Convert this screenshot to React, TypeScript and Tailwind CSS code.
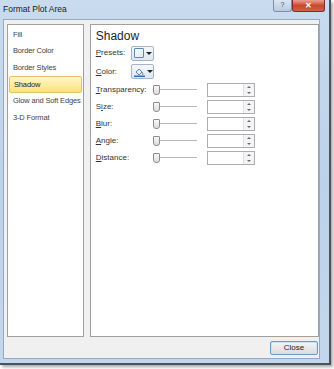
import React from "react";

const font = { fontFamily: '"Liberation Sans", Arial, sans-serif' };

function Slider() {
  return (
    <div className="relative w-[44px] h-[10px] flex items-center">
      <div className="absolute left-[3px] right-0 top-[4px] h-[1px] bg-[#b8b8b8]" />
      <div className="relative w-[7px] h-[10px] rounded-b-[3px] rounded-t-[1px] border border-[#8c8c8c] bg-gradient-to-b from-[#f8f8f8] to-[#dcdcdc]" />
    </div>
  );
}

function Spin() {
  return (
    <div className="w-[48px] h-[14px] border border-[#abadb3] bg-white flex justify-end">
      <div className="w-[11px] h-full flex flex-col border-l border-[#e0e0e0] bg-[#f4f4f4]">
        <div className="flex-1 flex items-center justify-center">
          <div className="w-0 h-0 border-l-[2px] border-r-[2px] border-b-[2px] border-l-transparent border-r-transparent border-b-[#6a6a6a]" />
        </div>
        <div className="flex-1 flex items-center justify-center">
          <div className="w-0 h-0 border-l-[2px] border-r-[2px] border-t-[2px] border-l-transparent border-r-transparent border-t-[#6a6a6a]" />
        </div>
      </div>
    </div>
  );
}

function Row({ label, u }: { label: string; u: number }) {
  return (
    <div className="flex items-center h-[17px]">
      <div className="w-[57px] text-[8px] text-[#333] whitespace-nowrap">
        {label.slice(0, u)}
        <span className="underline">{label[u]}</span>
        {label.slice(u + 1)}
      </div>
      <Slider />
      <div className="w-[10px]" />
      <Spin />
    </div>
  );
}

function DropBtn({ children }: { children: React.ReactNode }) {
  return (
    <div className="w-[23px] h-[15px] rounded-[2px] border border-[#a6b4c4] bg-gradient-to-b from-[#f5f8fb] to-[#dde6ef] flex items-center pl-[2px] gap-[2px]">
      {children}
      <div className="w-0 h-0 border-l-[3px] border-r-[3px] border-t-[3px] border-l-transparent border-r-transparent border-t-[#222]" />
    </div>
  );
}

export default function App() {
  const items = ["Fill", "Border Color", "Border Styles", "Shadow", "Glow and Soft Edges", "3-D Format"];
  return (
    <div className="w-[334px] h-[369px] bg-white overflow-hidden" style={font}>
      <div className="w-[331px] h-[365px] bg-gradient-to-b from-[#c9dbee] via-[#bcd2ea] to-[#c3d7ec] border-r-[2px] border-b-[2px] border-[#4a5460] shadow-[2px_2px_3px_rgba(0,0,0,0.35)] flex flex-col">
        <div className="h-[19px] flex items-start relative">
          <div className="text-[8.5px] text-[#1a1a1a] pl-[3px] pt-[5px] leading-none">Format Plot Area</div>
          <div className="absolute left-[273px] top-0 w-[19px] h-[12px] rounded-b-[3px] border border-t-0 border-[#7d8fa3] bg-gradient-to-b from-[#dbe6f2] to-[#b9cbe0] flex items-center justify-center text-[7px] text-[#3b4a5c]">?</div>
          <div className="absolute left-[292px] top-0 w-[33px] h-[12px] rounded-b-[3px] border border-t-0 border-[#7a3028] bg-gradient-to-b from-[#e8a08f] via-[#c9462f] to-[#d4604a] flex items-center justify-center text-[8px] font-bold text-white">✕</div>
        </div>
        <div className="ml-[3px] mr-[9px] h-[340px] border border-[#95aac0] bg-[#f0f0f0] flex flex-col">
          <div className="flex gap-[6px] pl-[3px] pt-[4px]">
            <div className="w-[77px] h-[313px] border border-[#a0a0a0] bg-white pt-[1px] px-[1px]">
              {items.map((it) => (
                <div
                  key={it}
                  className={
                    "h-[16.7px] flex items-center pl-[4px] text-[7.5px] tracking-[-0.15px] whitespace-nowrap " +
                    (it === "Shadow"
                      ? "border border-[#e5c365] rounded-[2px] bg-gradient-to-b from-[#fff6c7] to-[#ffe27a] text-[#1e1e1e]"
                      : "text-[#444]")
                  }
                >
                  {it}
                </div>
              ))}
            </div>
            <div className="w-[230px] h-[313px] border border-[#a0a0a0] bg-white pl-[5px] pt-[3px]">
              <div className="text-[12px] text-[#1e1e1e] leading-none h-[16px] pt-[2px]">Shadow</div>
              <div className="flex items-center h-[18px]">
                <div className="w-[35px] text-[8px] text-[#333]"><span className="underline">P</span>resets:</div>
                <DropBtn>
                  <div className="w-[10px] h-[10px] border border-[#5a88b8] rounded-[1px] bg-gradient-to-br from-white to-[#dce8f5]" />
                </DropBtn>
              </div>
              <div className="flex items-center h-[19px]">
                <div className="w-[35px] text-[8px] text-[#333]"><span className="underline">C</span>olor:</div>
                <DropBtn>
                  <svg width="11" height="10" viewBox="0 0 11 10">
                    <path d="M2 5 L5 2 L8 5 L5 8 Z" fill="#e8eef6" stroke="#4a6a90" strokeWidth="0.8" />
                    <path d="M8 5 Q9.5 7 8.5 8" stroke="#4a6a90" strokeWidth="0.8" fill="none" />
                    <rect x="0" y="8.5" width="11" height="1.5" fill="#2a6fc0" />
                  </svg>
                </DropBtn>
              </div>
              <Row label="Transparency:" u={0} />
              <Row label="Size:" u={1} />
              <Row label="Blur:" u={0} />
              <Row label="Angle:" u={0} />
              <Row label="Distance:" u={0} />
            </div>
          </div>
          <div className="flex justify-end pr-[1px] pt-[4px]">
            <div className="w-[48px] h-[14px] rounded-[2px] border border-[#6a9cc4] bg-gradient-to-b from-[#f4f4f4] to-[#dcdcdc] flex items-center justify-center text-[8px] text-[#1e1e1e] shadow-[inset_0_0_0_1px_#c8e4f6]">Close</div>
          </div>
        </div>
      </div>
    </div>
  );
}
